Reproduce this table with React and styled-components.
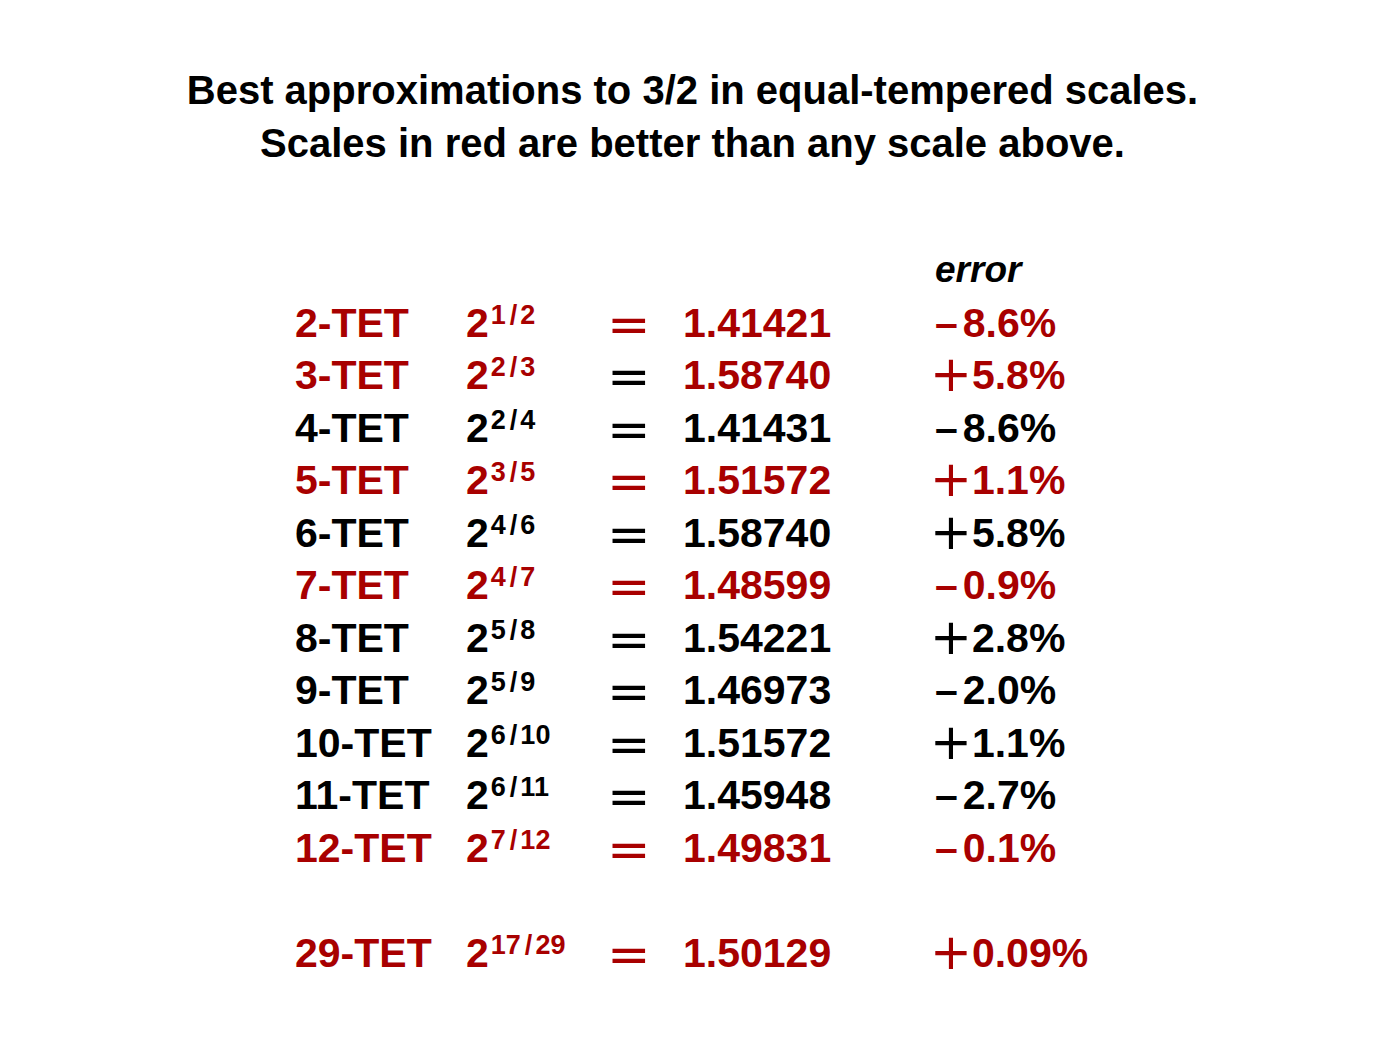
import React from 'react';
import styled, { createGlobalStyle } from 'styled-components';

const RED = '#a80000';

const GlobalStyle = createGlobalStyle`
  html, body {
    margin: 0;
    background: #fff;
  }
  body {
    font-family: "Liberation Sans", Arial, sans-serif;
    color: #000;
  }
`

const Page = styled.div`
  width: 1385px;
  min-height: 1043px;
  padding-top: 64px;
  box-sizing: border-box;
`

const Title = styled.h1`
  margin: 0;
  text-align: center;
  font-size: 40px;
  line-height: 53px;
  font-weight: bold;
`

const Table = styled.div`
  display: grid;
  grid-template-columns: 171px 141px 76px 252px auto;
  grid-auto-rows: 52.5px;
  margin: 74px 0 0 295px;
  font-size: 41px;
  line-height: 52.5px;
  font-weight: bold;
  white-space: nowrap;
`

const Cell = styled.div`
  color: ${(p) => (p.$red ? RED : '#000')};
`

const Header = styled.div`
  grid-column: 5;
  font-size: 37px;
  font-style: italic;
`

const Spacer = styled.div`
  grid-column: 1 / -1;
`

const Sup = styled.sup`
  font-size: 27px;
  line-height: 0;
  vertical-align: 13px;
  margin-left: 2px;
`

const Slash = styled.span`
  margin: 0 3px 0 4px;
`

const Minus = styled.span`
  margin-right: 5px;
`

const MathSign = styled.span`
  font-family: "DejaVu Sans", sans-serif;
  font-weight: normal;
  font-size: ${(p) => p.$size}px;
  vertical-align: ${(p) => p.$shift}px;
  margin-left: ${(p) => p.$pull}px;
  line-height: 0;
`

const rows = [
  { n: 2, a: 1, red: true, eq: true, val: '1.41421', sign: '-', err: '8.6%' },
  { n: 3, a: 2, red: true, eq: false, val: '1.58740', sign: '+', err: '5.8%' },
  { n: 4, a: 2, red: false, val: '1.41431', sign: '-', err: '8.6%' },
  { n: 5, a: 3, red: true, eq: true, val: '1.51572', sign: '+', err: '1.1%' },
  { n: 6, a: 4, red: false, val: '1.58740', sign: '+', err: '5.8%' },
  { n: 7, a: 4, red: true, eq: true, val: '1.48599', sign: '-', err: '0.9%' },
  { n: 8, a: 5, red: false, val: '1.54221', sign: '+', err: '2.8%' },
  { n: 9, a: 5, red: false, val: '1.46973', sign: '-', err: '2.0%' },
  { n: 10, a: 6, red: false, val: '1.51572', sign: '+', err: '1.1%' },
  { n: 11, a: 6, red: false, val: '1.45948', sign: '-', err: '2.7%' },
  { n: 12, a: 7, red: true, eq: true, val: '1.49831', sign: '-', err: '0.1%' },
  null,
  { n: 29, a: 17, red: true, eq: true, val: '1.50129', sign: '+', err: '0.09%' },
];

function Row({ r }) {
  return (
    <>
      <Cell $red={r.red}>{r.n}-TET</Cell>
      <Cell $red={r.red}>
        2<Sup>{r.a}<Slash>/</Slash>{r.n}</Sup>
      </Cell>
      <Cell $red={r.eq}>
        <MathSign $size={52} $shift={-5} $pull={0}>=</MathSign>
      </Cell>
      <Cell $red={r.red}>{r.val}</Cell>
      <Cell $red={r.red}>
        {r.sign === '+' ? (
          <MathSign $size={50} $shift={-2} $pull={-5}>+</MathSign>
        ) : (
          <Minus>–</Minus>
        )}
        {r.err}
      </Cell>
    </>
  );
}

export default function App() {
  return (
    <Page>
      <GlobalStyle />
      <Title>
        Best approximations to 3/2 in equal-tempered scales.
        <br />
        Scales in red are better than any scale above.
      </Title>
      <Table>
        <Header>error</Header>
        {rows.map((r, i) =>
          r ? <Row key={i} r={r} /> : <Spacer key={i} />
        )}
      </Table>
    </Page>
  );
}
